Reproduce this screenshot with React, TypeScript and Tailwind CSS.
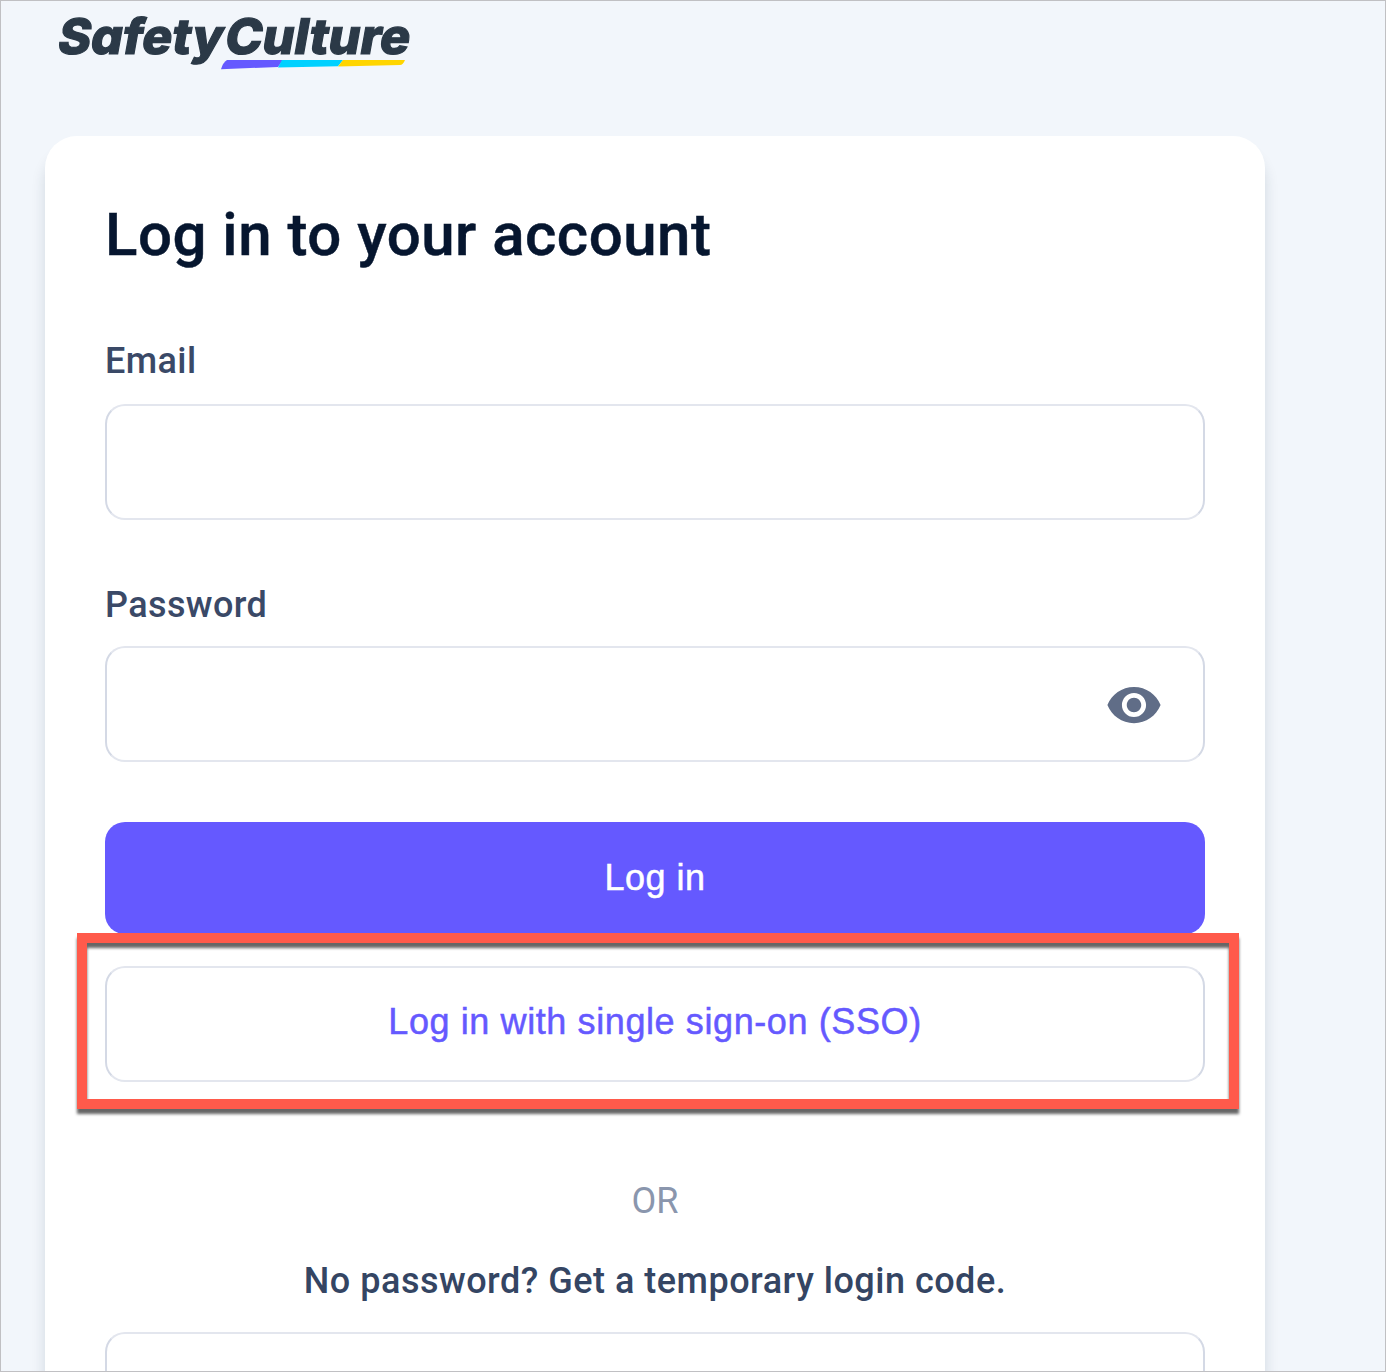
import React from "react";

const fieldBorder =
  "block w-full rounded-[20px] border-2 border-x-[#d4d9e5] border-y-[#e3e6ee] bg-white outline-none";

function Logo() {
  return (
    <svg
      className="block h-[80px] w-[370px]"
      viewBox="0 0 370 80"
      role="img"
      aria-label="SafetyCulture"
    >
      <g
        transform="translate(0 52.5) skewX(-10)"
        fill="#2b3947"
        stroke="#2b3947"
        strokeWidth="1.2"
        fontSize="49"
        className="font-[Inter] font-extrabold [font-feature-settings:'cv11']"
      >
        <text x="1" y="0" textLength="165" lengthAdjust="spacingAndGlyphs">
          Safety
        </text>
        <text x="168" y="0" textLength="185" lengthAdjust="spacingAndGlyphs">
          Culture
        </text>
      </g>
      <path d="M172 59H228L223 66L166 68.2Q168 61.5 172 59Z" fill="#6559ff" />
      <path d="M227 59H288L283 65.3L223 66.5Z" fill="#00d1ff" />
      <path d="M288 59H350Q348 64 345 64L283 65.5Z" fill="#ffd500" />
    </svg>
  );
}

function EyeIcon() {
  return (
    <svg className="mt-[2px] h-[58px] w-[58px]" viewBox="0 0 24 24" fill="#606d87">
      <path d="M12 4.5C7 4.5 2.73 7.61 1 12c1.73 4.39 6 7.5 11 7.5s9.27-3.11 11-7.5c-1.73-4.39-6-7.5-11-7.5zM12 17c-2.76 0-5-2.24-5-5s2.24-5 5-5 5 2.24 5 5-2.24 5-5 5zm0-8c-1.66 0-3 1.34-3 3s1.34 3 3 3 3-1.34 3-3-1.34-3-3-3z" />
    </svg>
  );
}

export default function App() {
  return (
    <div className="h-[1372px] w-[1386px] overflow-hidden border border-[#c0c0c3] bg-[#f2f6fb] font-[Roboto,sans-serif]">
      <header className="h-[135px] pl-[54px]">
        <Logo />
      </header>
      <main className="ml-[44px] h-[1300px] w-[1220px] rounded-[32px] bg-white px-[60px] pt-[61px] shadow-[0_16px_14px_rgba(30,50,65,0.15)]">
        <h1 className="h-[76px] whitespace-nowrap text-[60px] font-medium leading-[76px] tracking-[0.5px] text-[#06162f] [-webkit-text-stroke:0.5px_#06162f]">
          Log in to your account
        </h1>
        <label className="mt-[64px] block h-[48px] text-[36px] font-medium leading-[48px] tracking-[0.4px] text-[#3a4967]">
          Email
        </label>
        <input aria-label="Email" className={fieldBorder + " mt-[19px] h-[116px]"} />
        <label className="mt-[61px] block h-[48px] text-[36px] font-medium leading-[48px] tracking-[0.4px] text-[#3a4967]">
          Password
        </label>
        <div
          className={
            fieldBorder + " mt-[17px] flex h-[116px] items-center justify-end pr-[40px]"
          }
        >
          <EyeIcon />
        </div>
        <button className="mt-[60px] block h-[112px] w-full rounded-[20px] bg-[#6559ff] pb-[1px] font-['Liberation_Sans',sans-serif] text-[36px] tracking-[0.5px] text-white [-webkit-text-stroke:0.5px_#ffffff]">
          Log in
        </button>
        <div className="relative mt-[32px]">
          <button
            className={
              fieldBorder +
              " h-[116px] pb-[5px] font-['Liberation_Sans',sans-serif] text-[36px] tracking-[0.6px] text-[#6559ff] [-webkit-text-stroke:0.5px_#6559ff]"
            }
          >
            Log in with single sign-on (SSO)
          </button>
          <div className="pointer-events-none absolute -left-[28px] -top-[33px] h-[176px] w-[1162px] border-[10px] border-[#ff5a4b] drop-shadow-[0_5px_1.5px_rgba(0,0,0,0.6)]" />
        </div>
        <p className="mt-[95px] text-center text-[36px] leading-[48px] text-[#8a96ad]">OR</p>
        <p className="mt-[32px] text-center text-[36px] font-medium leading-[48px] tracking-[0.5px] text-[#344563]">
          No password? Get a temporary login code.
        </p>
        <div className={fieldBorder + " mt-[27px] h-[116px]"} />
      </main>
    </div>
  );
}
